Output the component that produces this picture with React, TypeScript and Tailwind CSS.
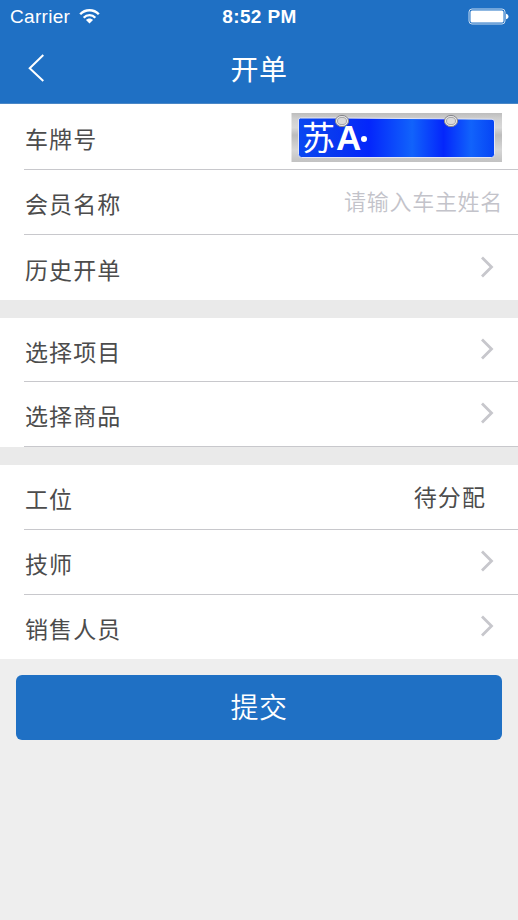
import type { ReactNode } from 'react'

const StatusBar = () => (
  <div className="flex h-[34px] items-center justify-between pr-[9px] pl-[10px]">
    <div className="flex w-[180px] items-center gap-[9px]">
      <span className="text-[19px] leading-8 font-light tracking-[0.3px]">
        Carrier
      </span>
      <svg
        className="mb-[2px]"
        width="21"
        height="15"
        viewBox="0 0 21 15"
        fill="none"
      >
        <path
          d="M1.2 5.3C6.3-.1 14.7-.1 19.8 5.3"
          stroke="white"
          strokeWidth="2.4"
        />
        <path
          d="M4.7 8.7C7.9 5.2 13.1 5.2 16.3 8.7"
          stroke="white"
          strokeWidth="2.3"
        />
        <path d="M7 11.1C9 9.1 12 9.1 14 11.1L10.5 14.6Z" fill="white" />
      </svg>
    </div>
    <span className="text-[19px] leading-8 font-bold tracking-[0.4px] whitespace-nowrap">
      8:52 PM
    </span>
    <div className="flex w-[180px] justify-end">
      <svg
        className="mb-px"
        width="41"
        height="17"
        viewBox="0 0 41 17"
        fill="none"
      >
        <rect
          x="1"
          y="1"
          width="36"
          height="15"
          rx="3"
          stroke="white"
          strokeOpacity=".75"
        />
        <rect x="2.5" y="2.5" width="33" height="12" rx="1.5" fill="white" />
        <path d="M38 5.7C41.3 6.5 41.3 10.5 38 11.3Z" fill="white" />
      </svg>
    </div>
  </div>
)

const Header = () => (
  <header className="h-[104px] border-b border-[#4a87c6] bg-[#1f70c4] text-white">
    <StatusBar />
    <div className="flex h-[67px] items-center px-7">
      <button type="button" aria-label="返回" className="w-10">
        <svg width="18" height="28" viewBox="0 0 18 28" fill="none">
          <path d="M15.3 1L1.7 14.3L15.3 27" stroke="white" strokeWidth="2" />
        </svg>
      </button>
      <h1 className="flex-1 pt-[6px] text-center text-[28px] leading-10 font-normal tracking-[0.5px]">
        开单
      </h1>
      <div className="w-10" />
    </div>
  </header>
)

const LicensePlate = () => (
  <div className="relative mt-[2px] mr-4 h-[49px] w-[211px]">
    <svg width="211" height="49" viewBox="0 0 211 49">
      <defs>
        <linearGradient id="frame" x1="0" y1="0" x2="0" y2="1">
          <stop offset="0" stopColor="#bdbdbd" />
          <stop offset=".12" stopColor="#cfcfcf" />
          <stop offset=".3" stopColor="#d8d8d8" />
          <stop offset=".45" stopColor="#bcbcbc" />
          <stop offset=".75" stopColor="#d6d6d6" />
          <stop offset="1" stopColor="#c2c2c2" />
        </linearGradient>
        <linearGradient id="plate" x1="0" y1="0" x2="1" y2="0">
          <stop offset="0" stopColor="#0a48f2" />
          <stop offset=".18" stopColor="#0838f0" />
          <stop offset=".36" stopColor="#0426fb" />
          <stop offset=".58" stopColor="#1163fb" />
          <stop offset=".74" stopColor="#0426fb" />
          <stop offset=".88" stopColor="#1163fb" />
          <stop offset="1" stopColor="#0644f5" />
        </linearGradient>
      </defs>
      <rect x=".5" width="210.5" height="49" fill="url(#frame)" />
      <path
        d="M9.5 5H50L201 6.2Q203.5 6.2 203.5 9V41.5Q203.5 44.5 200.5 44.5H10.5Q7.5 44.5 7.5 41.5V7Q7.5 5 9.5 5Z"
        fill="url(#plate)"
        stroke="#e3e6f4"
        strokeWidth="1"
      />
    </svg>
    <div className="absolute top-0 left-[11px] flex h-[49px] items-center text-white">
      <span className="pt-[2px] text-[33px] leading-[47px]">苏</span>
      <span className="ml-px text-[35px] leading-[47px] font-bold">A</span>
      <span className="mt-[2px] h-[6px] w-[6px] rounded-full bg-white" />
    </div>
    <svg className="absolute inset-0" width="211" height="49">
      {[51, 160].map((cx) => (
        <g key={cx}>
          <ellipse cx={cx} cy="8" rx="6.6" ry="5.6" fill="#e6e6e6" stroke="#85858a" />
          <ellipse cx={cx} cy="8" rx="4.5" ry="3.6" fill="#d9d9d9" stroke="#a5a5a8" />
        </g>
      ))}
    </svg>
  </div>
)

const Chevron = () => (
  <svg
    className="mr-[23px] mb-[2px]"
    width="15"
    height="22"
    viewBox="0 0 15 22"
    fill="none"
  >
    <path d="M2 1.5L11.5 11L2 20.5" stroke="#c7c7cc" strokeWidth="2.8" />
  </svg>
)

type RowProps = {
  label: string
  last?: boolean
  className?: string
  children?: ReactNode
}

const Row = ({ label, last, className = 'h-[65px]', children }: RowProps) => (
  <div
    className={`ml-6 flex items-center justify-between ${last ? '' : 'border-b border-[#c8c8cc]'} ${className}`}
  >
    <span className="pt-[6px] pl-[1px] text-[23px] leading-8 tracking-[1.1px] text-[#4c4c4c]">
      {label}
    </span>
    {children ?? <Chevron />}
  </div>
)

export default function App() {
  return (
    <main className="flex min-h-screen w-full flex-col bg-[#eeeeee] font-['Liberation_Sans','Noto_Sans_CJK_SC',sans-serif]">
      <Header />

      <div className="flex flex-col gap-[18px] bg-[#eaeaea]">
        <section className="bg-white">
          <Row label="车牌号" className="h-[66px]">
            <LicensePlate />
          </Row>
          <Row label="会员名称">
            <input
              className="mt-[2px] mr-[15px] w-[240px] text-right text-[22px] leading-8 font-[350] tracking-[0.7px] outline-none placeholder:text-[#c3c3ca]"
              placeholder="请输入车主姓名"
            />
          </Row>
          <Row label="历史开单" last />
        </section>

        <section className="bg-white">
          <Row label="选择项目" className="h-[64px]" />
          <Row label="选择商品" />
        </section>

        <section className="bg-white">
          <Row label="工位">
            <span className="mt-[2px] mr-8 text-[23px] leading-8 tracking-[1.1px] text-[#4c4c4c]">
              待分配
            </span>
          </Row>
          <Row label="技师" />
          <Row label="销售人员" last className="h-[64px]" />
        </section>
      </div>

      <button
        type="button"
        className="mx-4 mt-4 h-[65px] rounded-md bg-[#1f70c4] pt-[3px] text-[28px] font-[350] tracking-[0.5px] text-white"
      >
        提交
      </button>
    </main>
  )
}
